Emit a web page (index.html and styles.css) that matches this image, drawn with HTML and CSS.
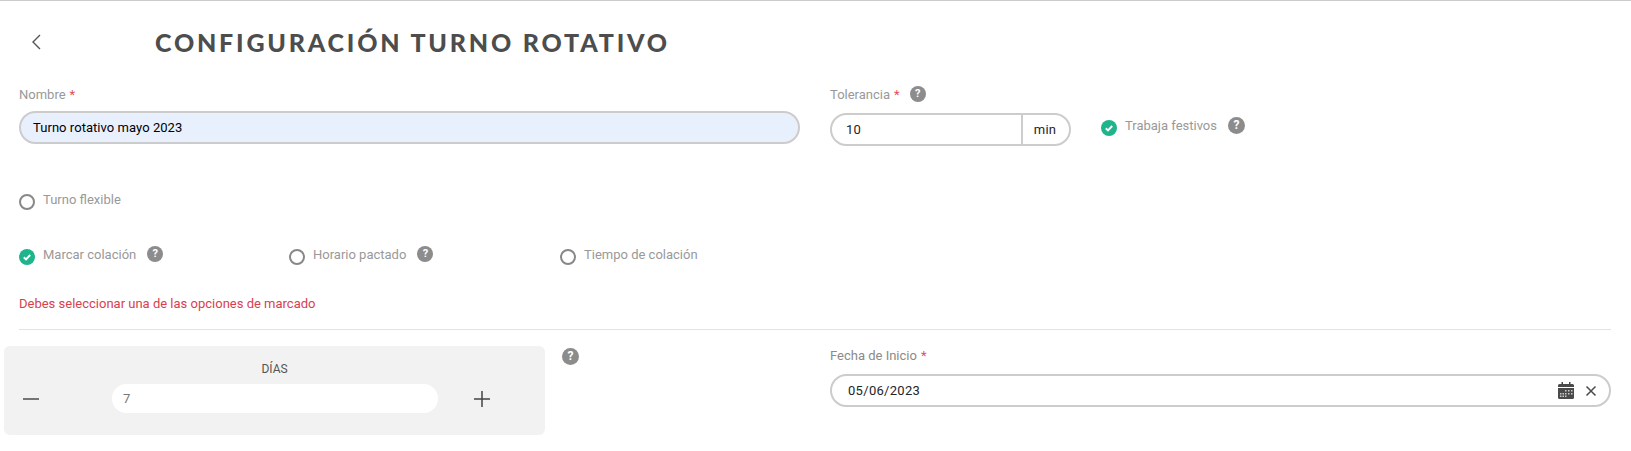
FILE: index.html
```html
<!DOCTYPE html>
<html lang="es">
<head>
    <meta charset="UTF-8">
    <meta name="viewport" content="width=device-width, initial-scale=1.0">
    <title>Configuración turno rotativo</title>
    <link rel="stylesheet" href="styles.css">
</head>
<body>
    <svg class="sprites" width="0" height="0" aria-hidden="true">
        <symbol id="check" viewBox="0 0 16 16">
            <circle cx="8" cy="8" r="8" fill="#20b48c"/>
            <path d="M4.800 8.300l2.200 2.100 4.200-4.400" fill="none" stroke="#fff" stroke-width="1.900"/>
        </symbol>
    </svg>

    <header class="page-header">
        <button class="back-button" aria-label="Volver">
            <svg width="12" height="18" viewBox="0 0 12 18"><path d="M10 2L3 9l7 7" fill="none" stroke="#555" stroke-width="1.400"/></svg>
        </button>
        <h1>CONFIGURACIÓN TURNO ROTATIVO</h1>
    </header>

    <main class="form">
        <div class="row row-top">
            <div class="field">
                <label class="label">Nombre <span class="req">*</span></label>
                <input class="input input-filled" type="text" value="Turno rotativo mayo 2023">
            </div>
            <div class="tolerance">
                <div class="field tolerance-field">
                    <label class="label">Tolerancia <span class="req">*</span><span class="help help-label">?</span></label>
                    <div class="input-group">
                        <input class="input-inner" type="text" value="10">
                        <span class="input-addon">min</span>
                    </div>
                </div>
                <div class="option option-holiday">
                    <svg class="check"><use href="#check"/></svg>
                    <span class="option-text">Trabaja festivos</span>
                    <span class="help help-big">?</span>
                </div>
            </div>
        </div>

        <div class="option option-flex">
            <span class="radio"></span>
            <span class="option-text">Turno flexible</span>
        </div>

        <div class="options">
            <div class="option">
                <svg class="check"><use href="#check"/></svg>
                <span class="option-text">Marcar colación</span>
                <span class="help">?</span>
            </div>
            <div class="option">
                <span class="radio"></span>
                <span class="option-text">Horario pactado</span>
                <span class="help">?</span>
            </div>
            <div class="option">
                <span class="radio"></span>
                <span class="option-text">Tiempo de colación</span>
            </div>
        </div>

        <p class="error">Debes seleccionar una de las opciones de marcado</p>
        <hr class="divider">

        <div class="row row-bottom">
            <div class="days-col">
                <div class="days-card">
                    <div class="days-title">DÍAS</div>
                    <div class="days-controls">
                        <button class="days-btn" aria-label="Menos">
                            <svg width="18" height="18" viewBox="0 0 18 18"><path d="M1 9h16" stroke="#555" stroke-width="1.600"/></svg>
                        </button>
                        <input class="days-input" type="text" value="7">
                        <button class="days-btn" aria-label="Más">
                            <svg width="18" height="18" viewBox="0 0 18 18"><path d="M1 9h16M9 1v16" stroke="#444" stroke-width="1.500"/></svg>
                        </button>
                    </div>
                </div>
                <span class="help help-big help-days">?</span>
            </div>
            <div class="field date-field">
                <label class="label label-dark">Fecha de Inicio <span class="req">*</span></label>
                <div class="input date-input">
                    <input class="input-inner" type="text" value="05/06/2023">
                    <svg class="calendar" width="16" height="17" viewBox="0 0 16 17">
                        <path d="M3.500 0h1.500v2h6V0h1.500v2h2A1.500 1.500 0 0 1 16 3.500V5H0V3.500A1.500 1.500 0 0 1 1.500 2h2z" fill="#4a4a4a"/>
                        <path d="M0 6h16v9.500a1.500 1.500 0 0 1-1.500 1.500h-13A1.500 1.500 0 0 1 0 15.500z" fill="#4a4a4a"/>
                        <path d="M7 8h1.500v1.500H7zM10 8h1.500v1.500H10zM13 8h1.500v1.500H13zM2 11h1.500v1.500H2zM4.500 11H6v1.500H4.500zM7 11h1.500v1.500H7zM10 11h1.500v1.500H10zM13 11h1.500v1.500H13zM2 13.500h1.500V15H2zM4.500 13.500H6V15H4.500zM7 13.500h1.500V15H7z" fill="#ccc"/>
                    </svg>
                    <svg class="clear" width="12" height="12" viewBox="0 0 12 12"><path d="M1.500 1.500l9 9M10.500 1.500l-9 9" stroke="#4a4a4a" stroke-width="1.500"/></svg>
                </div>
            </div>
        </div>
    </main>
</body>
</html>
```

FILE: styles.css
```css
* {
    box-sizing: border-box;
}
body {
    font-family: 'Roboto', sans-serif;
    font-size: 13px;
    color: #212529;
    background: #fff;
    margin: 0;
    border-top: 1px solid #ccc;
}
.sprites {
    display: block;
    height: 0;
}
button {
    background: none;
    border: none;
    padding: 0;
    display: flex;
}
.page-header {
    display: flex;
    align-items: center;
    height: 81px;
    padding-left: 30px;
}
.back-button {
    width: 125px;
}
h1 {
    margin: 0;
    font-family: 'Lato', sans-serif;
    font-size: 25px;
    font-weight: 900;
    letter-spacing: 2.8px;
    color: #4d4d4d;
}
.form {
    padding: 0 20px 0 19px;
}
.row {
    display: grid;
    grid-template-columns: 781px 781px;
    column-gap: 30px;
}
.row-top {
    margin-top: 2px;
}
.label {
    display: flex;
    align-items: center;
    gap: 4px;
    height: 20px;
    margin-bottom: 7px;
    color: #999;
}
.label-dark {
    color: #8a8a8a;
    margin-bottom: 9px;
}
.req {
    color: #e0505c;
}
.input {
    display: block;
    width: 100%;
    height: 33px;
    border: 2px solid #ccc;
    border-radius: 17px;
    padding: 0 12px;
    font: 400 13px 'Roboto', sans-serif;
    letter-spacing: .05px;
    color: #000;
    outline: none;
}
.input-filled {
    background: #e8f0fe;
}
.tolerance {
    display: flex;
}
.tolerance-field .label {
    margin-bottom: 9px;
}
.tolerance-field {
    width: 241px;
}
.input-group {
    display: flex;
    height: 33px;
    border: 2px solid #ccc;
    border-radius: 17px;
    overflow: hidden;
}
.input-inner {
    flex: 1;
    min-width: 0;
    border: none;
    outline: none;
    background: none;
    padding: 0 0 0 14px;
    font: 400 13px 'Roboto', sans-serif;
    letter-spacing: .3px;
    color: #212529;
}
.input-addon {
    display: flex;
    align-items: center;
    justify-content: center;
    width: 48px;
    border-left: 2px solid #ccc;
    padding-right: 2px;
    letter-spacing: .2px;
}
.help {
    width: 16px;
    height: 16px;
    flex: none;
    border-radius: 50%;
    background: #8c8c8c;
    color: #fff;
    font-size: 11px;
    font-weight: 700;
    line-height: 16px;
    text-align: center;
}
.help-big {
    width: 17px;
    height: 17px;
    line-height: 17px;
    font-size: 12px;
}
.help-label {
    margin-left: 6px;
}
.option {
    display: flex;
    align-items: flex-start;
    height: 18px;
}
.option-text {
    margin-left: 8px;
    color: #999;
    line-height: 15px;
}
.option .help {
    margin: -1px 0 0 11px;
}
.check {
    width: 16px;
    height: 16px;
    flex: none;
    margin-top: 2px;
}
.radio {
    width: 16px;
    height: 16px;
    flex: none;
    margin-top: 2px;
    border: 2px solid #888;
    border-radius: 50%;
}
.option-holiday {
    margin: 34px 0 0 30px;
}
.option-flex {
    margin-top: 46px;
}
.options {
    display: grid;
    grid-template-columns: 270px 271px 1fr;
    margin-top: 37px;
}
.error {
    margin: 31px 0 0;
    line-height: 16px;
    color: #d9404e;
}
.divider {
    margin: 17px 0 0;
    border: none;
    border-top: 1px solid #e3e3e3;
}
.row-bottom {
    margin-top: 16px;
}
.days-col {
    display: flex;
    align-items: flex-start;
    margin-left: -15px;
}
.days-card {
    width: 541px;
    height: 89px;
    padding-top: 15px;
    background: #f2f2f2;
    border-radius: 6px;
}
.days-title {
    text-align: center;
    line-height: 16px;
    font-size: 12px;
    color: #555;
}
.days-controls {
    display: flex;
    align-items: center;
    margin-top: 7px;
    padding-left: 18px;
}
.days-input {
    width: 326px;
    height: 29px;
    margin: 0 35px 0 72px;
    border: none;
    outline: none;
    border-radius: 15px;
    background: #fff;
    padding: 0 11px;
    font: 13px 'Roboto', sans-serif;
    color: #777;
}
.help-days {
    margin: 2px 0 0 17px;
}
.date-field {
    margin-top: -1px;
}
.date-input {
    display: flex;
    align-items: center;
    padding: 0 12px 0 0;
}
.date-input .input-inner {
    padding-left: 16px;
}
.calendar {
    margin: 0 11px 0 0;
}
```
